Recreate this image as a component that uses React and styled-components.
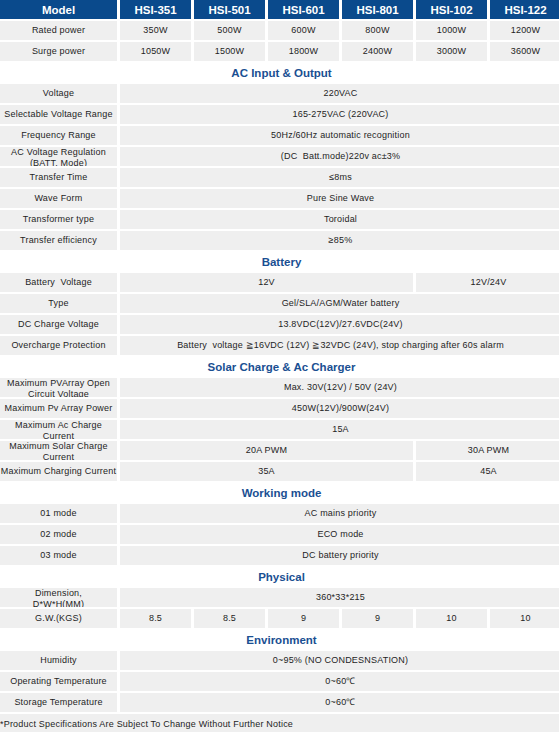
import styled, { createGlobalStyle } from 'styled-components';

const GlobalStyle = createGlobalStyle`
	html, body {
		margin: 0;
		padding: 0;
		background: #ffffff;
		overflow: hidden;
	}
`;

const models = ['HSI-351', 'HSI-501', 'HSI-601', 'HSI-801', 'HSI-102', 'HSI-122'];

// each row: [label, [[value, span], ...]] or { section: 'title' }
const rows = [
	['Rated power', [['350W', 1], ['500W', 1], ['600W', 1], ['800W', 1], ['1000W', 1], ['1200W', 1]]],
	['Surge power', [['1050W', 1], ['1500W', 1], ['1800W', 1], ['2400W', 1], ['3000W', 1], ['3600W', 1]]],
	{ section: 'AC Input & Output' },
	['Voltage', [['220VAC', 6]]],
	['Selectable Voltage Range', [['165-275VAC (220VAC)', 6]]],
	['Frequency Range', [['50Hz/60Hz automatic recognition', 6]]],
	['AC Voltage Regulation (BATT. Mode)', [['(DC  Batt.mode)220v ac±3%', 6]]],
	['Transfer Time', [['≤8ms', 6]]],
	['Wave Form', [['Pure Sine Wave', 6]]],
	['Transformer type', [['Toroidal', 6]]],
	['Transfer efficiency', [['≥85%', 6]]],
	{ section: 'Battery' },
	['Battery  Voltage', [['12V', 4], ['12V/24V', 2]]],
	['Type', [['Gel/SLA/AGM/Water battery', 6]]],
	['DC Charge Voltage', [['13.8VDC(12V)/27.6VDC(24V)', 6]]],
	['Overcharge Protection', [['Battery  voltage ≧16VDC (12V) ≧32VDC (24V), stop charging after 60s alarm', 6]]],
	{ section: 'Solar Charge & Ac Charger' },
	['Maximum PVArray Open Circuit Voltage', [['Max. 30V(12V) / 50V (24V)', 6]]],
	['Maximum Pv Array Power', [['450W(12V)/900W(24V)', 6]]],
	['Maximum Ac Charge Current', [['15A', 6]]],
	['Maximum Solar Charge Current', [['20A PWM', 4], ['30A PWM', 2]]],
	['Maximum Charging Current', [['35A', 4], ['45A', 2]]],
	{ section: 'Working mode' },
	['01 mode', [['AC mains priority', 6]]],
	['02 mode', [['ECO mode', 6]]],
	['03 mode', [['DC battery priority', 6]]],
	{ section: 'Physical' },
	['Dimension,\nD*W*H(MM)', [['360*33*215', 6]]],
	['G.W.(KGS)', [['8.5', 1], ['8.5', 1], ['9', 1], ['9', 1], ['10', 1], ['10', 1]]],
	{ section: 'Environment' },
	['Humidity', [['0~95% (NO CONDESNSATION)', 6]]],
	['Operating Temperature', [['0~60℃', 6]]],
	['Storage Temperature', [['0~60℃', 6]]],
];

function App() {
	return (
		<>
			<GlobalStyle />
			<SpecTable>
				<HeadCell>Model</HeadCell>
				{models.map((m) => (
					<HeadCell key={m}>{m}</HeadCell>
				))}

				{rows.map((row, i) => {
					if (row.section) {
						return <SectionTitle key={i}>{row.section}</SectionTitle>;
					}
					const [label, values] = row;
					return [
						<Cell key={`${i}-l`}>
							<span>{label}</span>
						</Cell>,
						...values.map(([v, span], j) => (
							<Cell key={`${i}-${j}`} $span={span}>
								<span>{v}</span>
							</Cell>
						)),
					];
				})}

				<Note>*Product Specifications Are Subject To Change Without Further Notice</Note>
			</SpecTable>
		</>
	);
}

export default App;

const SpecTable = styled.div`
	display: grid;
	grid-template-columns: 117px repeat(6, 71px);
	grid-auto-rows: 19px;
	column-gap: 3px;
	row-gap: 2px;
	width: 562px;
	font-family: 'Liberation Sans', Arial, sans-serif;
`;

const HeadCell = styled.div`
	display: flex;
	align-items: center;
	justify-content: center;
	background: #0a4a8c;
	color: #ffffff;
	font-size: 11.5px;
	font-weight: bold;
`;

const Cell = styled.div`
	grid-column: span ${(p) => p.$span || 1};
	display: flex;
	align-items: safe center;
	justify-content: center;
	background: #efefef;
	color: #1e1e1e;
	font-size: 9px;
	line-height: 11px;
	letter-spacing: 0.2px;
	text-align: center;
	overflow: hidden;
	white-space: pre-wrap;
`;

const SectionTitle = styled.div`
	grid-column: 1 / -1;
	display: flex;
	align-items: center;
	justify-content: center;
	color: #1a4f92;
	font-size: 11.5px;
	font-weight: bold;
	padding-left: 2px;
`;

const Note = styled.div`
	grid-column: 1 / -1;
	display: flex;
	align-items: center;
	background: #efefef;
	color: #1e1e1e;
	font-size: 9px;
	letter-spacing: 0.2px;
`;
